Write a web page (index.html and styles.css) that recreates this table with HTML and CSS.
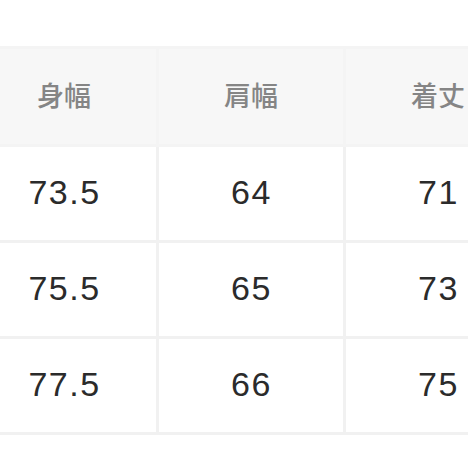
FILE: index.html
```html
<!DOCTYPE html>
<html lang="ja">
<head>
<meta charset="utf-8">
<link rel="stylesheet" href="styles.css">
</head>
<body>
<table class="size-table">
  <thead>
    <tr><th>身幅</th><th>肩幅</th><th>着丈</th></tr>
  </thead>
  <tbody>
    <tr><td>73.5</td><td>64</td><td>71</td></tr>
    <tr><td>75.5</td><td>65</td><td>73</td></tr>
    <tr><td>77.5</td><td>66</td><td>75</td></tr>
  </tbody>
</table>
</body>
</html>
```
FILE: styles.css
```css
html, body {
  margin: 0;
  padding: 0;
  background: #ffffff;
  overflow: hidden;
}
.size-table {
  border-collapse: collapse;
  margin-top: 46px;
  margin-left: -31px;
  table-layout: fixed;
  width: 561px;
}
.size-table th,
.size-table td {
  border: 3px solid #f1f1f1;
  text-align: center;
  padding: 0;
  width: 184px;
}
.size-table th {
  height: 91px;
  background: #f7f7f7;
  border-color: #f4f4f4;
  color: #858585;
  font-family: "Noto Sans CJK JP", sans-serif;
  font-weight: 500;
  font-size: 27px;
  padding-bottom: 4px;
}
.size-table td {
  height: 91px;
  color: #2b2b2b;
  font-family: "Liberation Sans", Arial, sans-serif;
  font-size: 34px;
  letter-spacing: 1.5px;
  padding-left: 1px;
  padding-bottom: 2px;
}
```
